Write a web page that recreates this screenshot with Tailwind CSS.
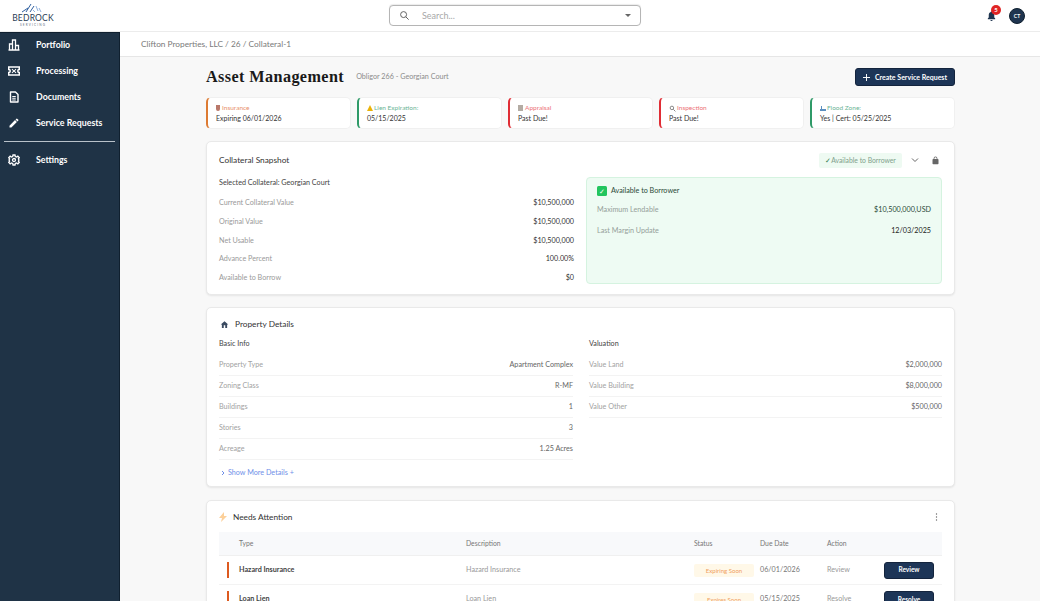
<!DOCTYPE html>
<html lang="en">
<head>
    <meta charset="UTF-8">
    <meta name="viewport" content="width=device-width, initial-scale=1.0">
    <title>Asset Management</title>
    <script src="https://cdn.jsdelivr.net/npm/@tailwindcss/browser@4"></script>
</head>
<body class="bg-[#f8f8f8] font-['Lato','Liberation_Sans',sans-serif]">
<div class="h-[601px] w-[1040px] overflow-hidden flex flex-col">
    <!-- Top bar -->
    <header class="h-[32px] shrink-0 bg-white border-b border-[#ececec] flex items-center">
        <div class="w-[66px] h-[31px] flex flex-col items-center pt-[3px]">
            <svg width="24" height="10" viewBox="0 0 24 10" fill="none">
                <path d="M1 9 L7 5 M5 9 L10 1 M9 9 L13 3" stroke="#2f5f9f" stroke-width="1"/>
                <path d="M15 3 L17 8 M18 5 L20 9 M12 7 L14 9" stroke="#8fb0dc" stroke-width="1"/>
            </svg>
            <span class="mt-[1px] text-[8.5px] leading-[8px] text-[#2a3c55] tracking-[0.2px]">BEDROCK</span>
            <span class="mt-[1px] text-[3px] leading-[4px] text-[#5d6b7c] tracking-[1.2px]">SERVICING</span>
        </div>
        <div class="ml-[323px] w-[252px] h-[21px] border border-[#b5b5b5] rounded-[4px] flex items-center pl-[9px] pr-[9px] bg-white shadow-[0_-1px_1px_rgba(0,0,0,0.08)]">
            <svg width="11" height="11" viewBox="0 0 24 24" fill="none" stroke="#555" stroke-width="2"><circle cx="10" cy="10" r="6.5"/><path d="M15 15l6 6"/></svg>
            <span class="ml-[12px] text-[9px] text-[#a8a8a8]">Search...</span>
            <span class="ml-auto w-0 h-0 border-l-[3px] border-r-[3px] border-t-[3px] border-l-transparent border-r-transparent border-t-[#666]"></span>
        </div>
        <div class="ml-auto mr-[15px] flex items-center gap-[13px]">
            <div class="relative w-[10px] h-[12px]">
                <svg width="11" height="12" viewBox="0 0 24 24" fill="#1f3550"><path d="M12 23a2.500 2.500 0 0 0 2.500-2.500h-5A2.500 2.500 0 0 0 12 23zm8-6-2-2V10c0-3.200-1.700-5.800-4.500-6.500V3a1.500 1.500 0 0 0-3 0v.5C7.700 4.200 6 6.800 6 10v5l-2 2v2h16v-2z"/></svg>
                <span class="absolute top-[-5px] left-[5px] w-[10px] h-[10px] rounded-full bg-[#e02424] text-white text-[6px] font-bold leading-[10px] text-center">5</span>
            </div>
            <div class="w-[16px] h-[16px] rounded-full bg-[#1f3550] border border-[#10202f] text-white text-[5px] font-bold leading-[14px] text-center">CT</div>
        </div>
    </header>

    <div class="flex flex-1 min-h-0">
        <!-- Sidebar -->
        <aside class="w-[120px] shrink-0 bg-[#1f3346] border-r border-t border-[#10202f] text-white text-[8.800px] font-bold">
            <div class="h-[26px] mt-[-1px] flex items-center pl-[8px]">
                <svg class="w-[12px] h-[12px] mr-[16px]" viewBox="0 0 24 24" fill="none" stroke="white" stroke-width="2.600"><path d="M1 22h22M3 22V10h6v12M9 22V2h6v20M15 22v-9h6v9"/></svg>Portfolio
            </div>
            <div class="h-[26px] flex items-center pl-[8px]">
                <svg class="w-[12px] h-[12px] mr-[16px]" viewBox="0 0 24 24" fill="none" stroke="white" stroke-width="3"><path d="M1.500 4h21v5a3 3 0 0 0 0 6v5h-21v-5a3 3 0 0 0 0-6V4z"/><path d="M8 8l3.500 4L8 16M16 8l-3.500 4 3.500 4" stroke-width="2.200"/></svg>Processing
            </div>
            <div class="h-[26px] flex items-center pl-[8px]">
                <svg class="w-[12px] h-[12px] mr-[16px]" viewBox="0 0 24 24" fill="none" stroke="white" stroke-width="2.800" stroke-linejoin="round"><path d="M5 2h10l5 5v15H5z"/><path d="M8.500 11h7M8.500 14.500h7M8.500 18h7" stroke-width="2"/></svg>Documents
            </div>
            <div class="h-[26px] flex items-center pl-[8px]">
                <svg class="w-[12px] h-[12px] mr-[16px]" viewBox="0 0 24 24" fill="white"><path d="M3 17.250V21h3.750L17.800 9.940l-3.750-3.750L3 17.250zM20.700 7.040a1 1 0 0 0 0-1.410l-2.340-2.340a1 1 0 0 0-1.410 0l-1.830 1.830 3.750 3.750 1.830-1.830z"/></svg>Service Requests
            </div>
            <div class="h-px bg-[#b9c2ca] mx-[4px] mt-[5px] mb-[5px]"></div>
            <div class="h-[26px] flex items-center pl-[8px]">
                <svg class="w-[12px] h-[12px] mr-[16px]" viewBox="0 0 24 24" fill="none" stroke="white" stroke-width="2.600"><circle cx="12" cy="12" r="3"/><path d="M10 2h4l.6 3 2.500 1.100 2.600-1.700 2.800 2.800-1.700 2.600L21.900 12l-1.100 2.200 1.700 2.600-2.800 2.800-2.600-1.700-2.500 1.100-.6 3h-4l-.6-3-2.500-1.100-2.600 1.700-2.800-2.800 1.700-2.600L2.100 12l1.100-2.200-1.700-2.600 2.800-2.800 2.600 1.700L9.400 5z"/></svg>Settings
            </div>
        </aside>

        <main class="flex-1 min-w-0 overflow-hidden">
            <!-- Breadcrumb -->
            <div class="h-[25px] bg-white border-b border-[#e6e6e6] pl-[21px] flex items-center text-[8.300px] text-[#7a7a7a]">
                Clifton Properties, LLC&nbsp;/&nbsp;26&nbsp;/&nbsp;Collateral-1
            </div>

            <div class="w-[749px] ml-[86px]">
                <div class="h-[40px] flex items-center">
                    <h1 class="font-['Liberation_Serif',serif] font-bold text-[16.200px] tracking-[0.4px] text-[#1a1a1a]">Asset Management</h1>
                    <span class="ml-[12px] text-[7.200px] text-[#8c8c8c]">Obligor 266 - Georgian Court</span>
                    <button class="ml-auto w-[100px] h-[18px] bg-[#1d3557] border border-[#14243d] rounded-[3px] text-white text-[7px] font-bold flex items-center justify-center gap-[5px]">
                        <svg width="7" height="7" viewBox="0 0 8 8" stroke="white" stroke-width="1.100"><path d="M4 0v8M0 4h8"/></svg>Create Service Request
                    </button>
                </div>

                <!-- Status cards -->
                <div class="grid grid-cols-5 gap-[6px]">
                    <div class="h-[32px] bg-white rounded-[5px] border border-[#f0f0f0] border-l-2 border-l-[#dd7b33] pl-[8px] pt-[5px]">
                        <div class="text-[6.500px] leading-[10px] text-[#e8906a] flex items-center gap-[2px]"><span class="w-[4px] h-[6px] rounded-b-[3px] bg-[#b9786a]"></span>Insurance</div>
                        <div class="text-[7px] leading-[10px] text-[#333]">Expiring 06/01/2026</div>
                    </div>
                    <div class="h-[32px] bg-white rounded-[5px] border border-[#f0f0f0] border-l-2 border-l-[#2f9a68] pl-[8px] pt-[5px]">
                        <div class="text-[6.500px] leading-[10px] text-[#6cb496] flex items-center gap-[1px]"><svg width="6" height="6" viewBox="0 0 6 6"><path d="M3 0l3 6H0z" fill="#eab308"/></svg>Lien Expiration:</div>
                        <div class="text-[7px] leading-[10px] text-[#333]">05/15/2025</div>
                    </div>
                    <div class="h-[32px] bg-white rounded-[5px] border border-[#f0f0f0] border-l-2 border-l-[#e02d35] pl-[8px] pt-[5px]">
                        <div class="text-[6.500px] leading-[10px] text-[#ec7277] flex items-center gap-[2px]"><span class="w-[5px] h-[6px] bg-[#b4aca4]"></span>Appraisal</div>
                        <div class="text-[7px] leading-[10px] text-[#333]">Past Due!</div>
                    </div>
                    <div class="h-[32px] bg-white rounded-[5px] border border-[#f0f0f0] border-l-2 border-l-[#e02d35] pl-[8px] pt-[5px]">
                        <div class="text-[6.500px] leading-[10px] text-[#ec7277] flex items-center gap-[1px]"><svg width="7" height="7" viewBox="0 0 24 24" fill="none" stroke="#777" stroke-width="3"><circle cx="10" cy="10" r="6"/><path d="M15 15l7 7"/></svg>Inspection</div>
                        <div class="text-[7px] leading-[10px] text-[#333]">Past Due!</div>
                    </div>
                    <div class="h-[32px] bg-white rounded-[5px] border border-[#f0f0f0] border-l-2 border-l-[#2f9a68] pl-[8px] pt-[5px]">
                        <div class="text-[6.500px] leading-[10px] text-[#6cb496] flex items-center gap-[1px]"><svg width="6" height="6" viewBox="0 0 6 6"><path d="M0 6V4h6v2zM1 4V1h1v3z" fill="#5b8fc0"/></svg>Flood Zone:</div>
                        <div class="text-[7px] leading-[10px] text-[#333]">Yes | Cert: 05/25/2025</div>
                    </div>
                </div>

                <!-- Collateral snapshot -->
                <section class="mt-[12px] h-[154px] bg-white rounded-[5px] border border-[#e9e9e9] shadow-[0_1px_2px_rgba(0,0,0,0.08)] px-[12px]">
                    <div class="h-[36px] flex items-center">
                        <h2 class="text-[8.300px] text-[#333]">Collateral Snapshot</h2>
                        <span class="ml-auto w-[83px] h-[15px] rounded-[2px] bg-[#eefaf2] text-[6.800px] text-[#7f9f8c] leading-[15px] text-center"><span class="text-[#2f7a4d]">✓</span>Available to Borrower</span>
                        <svg class="ml-[9px]" width="8" height="8" viewBox="0 0 8 8" fill="none" stroke="#666"><path d="M1 2.500l3 3 3-3"/></svg>
                        <svg class="ml-[12px] mr-[2px]" width="9" height="9" viewBox="0 0 24 24" fill="#666"><path d="M18 8h-1V6A5 5 0 0 0 7 6v2H6a2 2 0 0 0-2 2v10a2 2 0 0 0 2 2h12a2 2 0 0 0 2-2V10a2 2 0 0 0-2-2zM9 6a3 3 0 0 1 6 0v2H9V6z"/></svg>
                    </div>
                    <div class="flex gap-[12px]">
                        <div class="w-[355px]">
                            <div class="text-[7.200px] leading-[10px] text-[#444] mb-[6px]">Selected Collateral: Georgian Court</div>
                            <div class="h-[18.800px] flex items-center justify-between text-[7.200px] text-[#333]"><span class="text-[#9a9a9a]">Current Collateral Value</span><span>$10,500,000</span></div>
                            <div class="h-[18.800px] flex items-center justify-between text-[7.200px] text-[#333]"><span class="text-[#9a9a9a]">Original Value</span><span>$10,500,000</span></div>
                            <div class="h-[18.800px] flex items-center justify-between text-[7.200px] text-[#333]"><span class="text-[#9a9a9a]">Net Usable</span><span>$10,500,000</span></div>
                            <div class="h-[18.800px] flex items-center justify-between text-[7.200px] text-[#333]"><span class="text-[#9a9a9a]">Advance Percent</span><span>100.00%</span></div>
                            <div class="h-[18.800px] flex items-center justify-between text-[7.200px] text-[#333]"><span class="text-[#9a9a9a]">Available to Borrow</span><span>$0</span></div>
                        </div>
                        <div class="flex-1 h-[107px] mt-[-1px] bg-[#eefbf3] border border-[#d5f3e0] rounded-[4px] px-[10px] pt-[8px]">
                            <div class="flex items-center gap-[4px] text-[7.200px] text-[#2c4a38]">
                                <span class="w-[10px] h-[10px] bg-[#22c55e] rounded-[1.500px] text-white text-[7px] leading-[10px] text-center">✓</span>Available to Borrower
                            </div>
                            <div class="h-[21px] mt-[3px] flex items-center justify-between text-[7.200px]"><span class="text-[#95a09a]">Maximum Lendable</span><span class="text-[#2c4a38]">$10,500,000,USD</span></div>
                            <div class="h-[21px] flex items-center justify-between text-[7.200px]"><span class="text-[#95a09a]">Last Margin Update</span><span class="text-[#222]">12/03/2025</span></div>
                        </div>
                    </div>
                </section>

                <!-- Property details -->
                <section class="mt-[12px] h-[180px] bg-white rounded-[5px] border border-[#e9e9e9] shadow-[0_1px_2px_rgba(0,0,0,0.08)] px-[12px]">
                    <div class="h-[30px] pt-[2px] flex items-center gap-[6px]">
                        <svg class="ml-[1px]" width="9" height="9" viewBox="0 0 24 24" fill="#3a4a60"><path d="M10 21v-7h4v7h5v-9h3L12 3 2 12h3v9z"/></svg>
                        <h2 class="text-[8.300px] text-[#333]">Property Details</h2>
                    </div>
                    <div class="flex gap-[16px]">
                        <div class="w-[354px]">
                            <div class="text-[7.200px] leading-[10px] text-[#444] mt-[1px] mb-[6px]">Basic Info</div>
                            <div class="h-[21.100px] border-b border-[#f3f3f3] flex items-center justify-between text-[7.200px]"><span class="text-[#a2a2a2]">Property Type</span><span class="text-[#666]">Apartment Complex</span></div>
                            <div class="h-[21.100px] border-b border-[#f3f3f3] flex items-center justify-between text-[7.200px]"><span class="text-[#a2a2a2]">Zoning Class</span><span class="text-[#666]">R-MF</span></div>
                            <div class="h-[21.100px] border-b border-[#f3f3f3] flex items-center justify-between text-[7.200px]"><span class="text-[#a2a2a2]">Buildings</span><span class="text-[#666]">1</span></div>
                            <div class="h-[21.100px] border-b border-[#f3f3f3] flex items-center justify-between text-[7.200px]"><span class="text-[#a2a2a2]">Stories</span><span class="text-[#666]">3</span></div>
                            <div class="h-[21.100px] border-b border-[#f3f3f3] flex items-center justify-between text-[7.200px]"><span class="text-[#a2a2a2]">Acreage</span><span class="text-[#666]">1.25 Acres</span></div>
                            <div class="mt-[8px] flex items-center text-[7.200px] text-[#6f8fe8] leading-[10px] pl-[1px]">
                                <svg class="mr-[2px]" width="6" height="6" viewBox="0 0 6 6" fill="none" stroke="#6f8fe8"><path d="M2 1l2 2-2 2"/></svg>Show More Details +
                            </div>
                        </div>
                        <div class="flex-1">
                            <div class="text-[7.200px] leading-[10px] text-[#444] mt-[1px] mb-[6px]">Valuation</div>
                            <div class="h-[21.100px] border-b border-[#f3f3f3] flex items-center justify-between text-[7.200px]"><span class="text-[#a2a2a2]">Value Land</span><span class="text-[#666]">$2,000,000</span></div>
                            <div class="h-[21.100px] border-b border-[#f3f3f3] flex items-center justify-between text-[7.200px]"><span class="text-[#a2a2a2]">Value Building</span><span class="text-[#666]">$8,000,000</span></div>
                            <div class="h-[21.100px] border-b border-[#f3f3f3] flex items-center justify-between text-[7.200px]"><span class="text-[#a2a2a2]">Value Other</span><span class="text-[#666]">$500,000</span></div>
                        </div>
                    </div>
                </section>

                <!-- Needs attention -->
                <section class="mt-[13px] h-[130px] bg-white rounded-[5px] border border-[#e9e9e9] shadow-[0_1px_2px_rgba(0,0,0,0.08)] px-[12px]">
                    <div class="h-[31px] pt-[1px] flex items-center gap-[6px]">
                        <svg width="8" height="10" viewBox="0 0 8 10"><path d="M5 0L0 6h3L2 10l6-6H5z" fill="#fcd09a"/></svg>
                        <h2 class="text-[8.300px] text-[#333]">Needs Attention</h2>
                        <svg class="ml-auto mr-[4px]" width="3" height="8" viewBox="0 0 3 8" fill="#666"><circle cx="1.500" cy="1" r="0.700"/><circle cx="1.500" cy="4" r="0.700"/><circle cx="1.500" cy="7" r="0.700"/></svg>
                    </div>
                    <div class="h-[24px] bg-[#f8f9fb] border-b border-[#f0f0f0] grid grid-cols-[227px_228px_66px_67px_1fr] pl-[20px] items-center text-[6.800px] text-[#777]">
                        <span>Type</span><span>Description</span><span>Status</span><span>Due Date</span><span>Action</span>
                    </div>
                    <div class="h-[29px] border-b border-[#f3f3f3] relative grid grid-cols-[227px_228px_66px_67px_1fr] pl-[20px] items-center text-[7.200px]">
                        <span class="absolute left-[8px] top-[6px] w-[2px] h-[16px] bg-[#dd5a1f]"></span>
                        <span class="font-bold text-[#444]">Hazard Insurance</span>
                        <span class="text-[#999]">Hazard Insurance</span>
                        <span class="w-[60px] h-[13px] bg-[#fff8e8] rounded-[2px] text-[6px] leading-[13px] text-center text-[#f0a060]">Expiring Soon</span>
                        <span class="text-[#777]">06/01/2026</span>
                        <span class="flex items-center justify-between text-[#999]">Review<button class="w-[50px] h-[17px] bg-[#1d3557] border border-[#14243d] rounded-[3px] text-white text-[6.500px] font-bold mr-[8px]">Review</button></span>
                    </div>
                    <div class="h-[29px] relative grid grid-cols-[227px_228px_66px_67px_1fr] pl-[20px] items-center text-[7.200px]">
                        <span class="absolute left-[8px] top-[6px] w-[2px] h-[16px] bg-[#dd5a1f]"></span>
                        <span class="font-bold text-[#444]">Loan Lien</span>
                        <span class="text-[#999]">Loan Lien</span>
                        <span class="w-[60px] h-[13px] bg-[#fff8e8] rounded-[2px] text-[6px] leading-[13px] text-center text-[#f0a060]">Expires Soon</span>
                        <span class="text-[#777]">05/15/2025</span>
                        <span class="flex items-center justify-between text-[#999]">Resolve<button class="w-[50px] h-[17px] bg-[#1d3557] border border-[#14243d] rounded-[3px] text-white text-[6.500px] font-bold mr-[8px]">Resolve</button></span>
                    </div>
                </section>
            </div>
        </main>
    </div>
</div>
</body>
</html>
